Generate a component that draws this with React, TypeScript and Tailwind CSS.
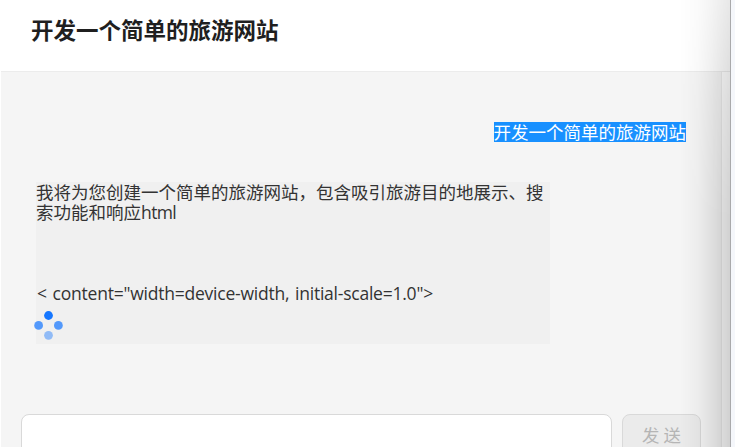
const title = '开发一个简单的旅游网站';

function Spinner() {
  return (
    <svg className="absolute -left-0.5 top-32 h-[30px] w-[30px]" viewBox="0 0 30 30" fill="#1677ff">
      <circle cx="14.5" cy="5.5" r="4.4" />
      <circle cx="4.6" cy="15.4" r="4.4" opacity="0.72" />
      <circle cx="24.4" cy="15.4" r="4.4" opacity="0.72" />
      <circle cx="14.5" cy="25.3" r="4.4" opacity="0.43" />
    </svg>
  );
}

export default function App() {
  return (
    <div className="flex h-[447px] w-[735px] overflow-hidden bg-[#f5f7fb]">
      <div className="relative flex w-[731px] flex-col border-r border-[#a9a9ab] bg-white pl-px">
        <header className="flex h-[72px] shrink-0 items-center border-b border-[#ececec] pb-[13px] pl-[30px]">
          <h1 className="whitespace-nowrap font-['Noto_Sans_CJK_SC',sans-serif] text-[22.5px] font-bold leading-8 text-[#1f1f1f]">{title}</h1>
        </header>
        <main className="flex h-[375px] flex-col bg-[#f5f5f5] pl-[35px]">
          <div className="mt-[50px] flex shrink-0 justify-end pr-11">
            <span className="h-5 whitespace-nowrap bg-[#1890ff] font-['Noto_Sans_CJK_SC',sans-serif] text-[17.5px] leading-5 text-white">{title}</span>
          </div>
          <section className="relative mt-10 h-[162px] w-[514px] shrink-0 bg-[#f0f0f0] text-[17.5px] leading-5 text-[#333]">
            <p className="whitespace-nowrap font-['Noto_Sans_CJK_SC',sans-serif]">我将为您创建一个简单的旅游网站，包含吸引旅游目的地展示、搜</p>
            <p className="flex h-5 whitespace-nowrap">
              <span className="font-['Noto_Sans_CJK_SC',sans-serif]">索功能和响应</span>
              <span className="font-['Open_Sans',sans-serif] tracking-[-0.6px]">html</span>
            </p>
            <p className="mt-[61px] whitespace-nowrap pl-px font-['Open_Sans',sans-serif] tracking-[-0.23px] [word-spacing:1.5px]">&lt; content="width=device-width, initial-scale=1.0"&gt;</p>
            <Spinner />
          </section>
          <form className="-ml-[15px] mt-[70px] flex shrink-0 gap-2.5">
            <div className="h-[60px] w-[591px] rounded-lg border border-[#d9d9d9] bg-white" />
            <button type="button" disabled className="flex h-[60px] w-[79px] justify-center rounded-lg border border-[#d9d9d9] bg-[#ebebeb] pt-2.5 font-['Noto_Sans_CJK_SC',sans-serif] text-[17.45px] leading-5 text-[#b5b5b5]">发 送</button>
          </form>
        </main>
        <div className="pointer-events-none absolute bottom-0 right-0 top-[72px] w-[9px] border-l border-[#ececec] bg-white" />
        <div className="pointer-events-none absolute inset-y-0 right-0 w-[50px] bg-[linear-gradient(to_right,transparent,rgba(0,0,0,.03)_35%,rgba(0,0,0,.08)_60%,rgba(0,0,0,.13)_80%,rgba(0,0,0,.18))] [mask-image:linear-gradient(to_bottom,rgba(0,0,0,.5),rgba(0,0,0,.8)_100px,black_220px)]" />
      </div>
    </div>
  );
}
